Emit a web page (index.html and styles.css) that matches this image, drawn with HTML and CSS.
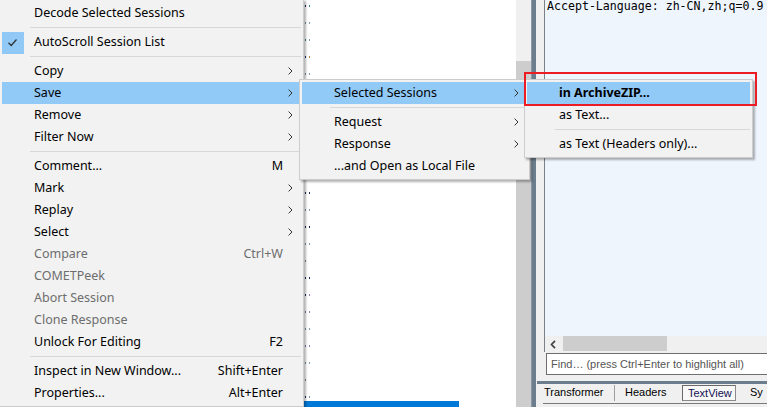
FILE: index.html
```html
<!DOCTYPE html>
<html>
<head>
<meta charset="utf-8">
<link rel="stylesheet" href="styles.css">
</head>
<body>
<div class="app">
  <div class="sessions">
    <div class="srow"><i class="d c1"></i><i class="d c2"></i></div>
    <div class="srow"><i class="d c3"></i><i class="d c3"></i></div>
    <div class="srow"><i class="d c2"></i><i class="d c3"></i></div>
    <div class="srow"><i class="d c1"></i><i class="d c4"></i></div>
    <div class="srow"><i class="d c3"></i><i class="d c3"></i></div>
    <div class="srow"><i class="d c2"></i><i class="d c1"></i></div>
    <div class="srow"><i class="d c1"></i><i class="d c2"></i></div>
    <div class="srow"><i class="d c3"></i><i class="d c3"></i></div>
    <div class="srow"><i class="d c1"></i><i class="d c2"></i></div>
    <div class="srow"><i class="d c1"></i><i class="d c2"></i></div>
    <div class="srow"><i class="d c3"></i><i class="d c3"></i></div>
    <div class="srow"><i class="d c1"></i><i class="d c1"></i></div>
    <div class="srow"><i class="d c3"></i><i class="d c3"></i></div>
    <div class="srow"><i class="d c1"></i><i class="d c1"></i></div>
    <div class="srow"><i class="d c3"></i><i class="d c3"></i></div>
    <div class="srow"><i class="d c5"></i></div>
    <div class="srow"><i class="d c1"></i><i class="d c1"></i></div>
    <div class="srow"><i class="d c1"></i><i class="d c6"></i></div>
    <div class="srow"><i class="d c6"></i><i class="d c6"></i></div>
    <div class="srow"><i class="d c3"></i><i class="d c3"></i></div>
    <div class="srow"><i class="d c6"></i><i class="d c6"></i></div>
    <div class="srow"><i class="d c3"></i><i class="d c3"></i></div>
    <div class="srow"><i class="d c5"></i></div>
    <div class="srow"><i class="d c1"></i><i class="d c3"></i></div>
    <div class="srow sel"><div class="selbar"></div></div>
  </div>
  <div class="vscroll"><div class="vthumb"></div></div>
  <div class="splitter"></div>
  <div class="inspector">
    <div class="gutter"></div>
    <div class="insp-top">
      <div class="textarea"><pre class="raw">Accept-Language: zh-CN,zh;q=0.9</pre></div>
      <div class="hscroll">
        <svg class="hs-arrow" width="6" height="9" viewBox="0 0 6 9"><polyline points="5,0.8 1.5,4.5 5,8.2" fill="none" stroke="#444" stroke-width="1.7"/></svg>
        <div class="hthumb"></div>
      </div>
      <div class="find">Find… (press Ctrl+Enter to highlight all)</div>
    </div>
    <div class="hstripe"></div>
    <div class="tabs">
      <div class="tab t1">Transformer</div>
      <div class="tab t2">Headers</div>
      <div class="tab t3 active">TextView</div>
      <div class="tab t4">Sy</div>
    </div>
  </div>
</div>

<div class="menu main-menu">
  <div class="item"><span class="ic"></span><span class="label">Decode Selected Sessions</span><span class="arr"></span></div>
  <div class="sep"></div>
  <div class="item"><span class="ic"><span class="check"><svg width="22" height="22" viewBox="0 0 22 22"><polyline points="6.5,10.8 9.2,13.5 14.5,7.5" fill="none" stroke="#333" stroke-width="1.3"/></svg></span></span><span class="label">AutoScroll Session List</span><span class="arr"></span></div>
  <div class="sep"></div>
  <div class="item"><span class="ic"></span><span class="label">Copy</span><span class="arr"><svg width="5" height="8" viewBox="0 0 5 8"><polyline points="0.6,0.6 4,4 0.6,7.4" fill="none" stroke="#333" stroke-width="1"/></svg></span></div>
  <div class="item hl"><span class="ic"></span><span class="label">Save</span><span class="arr"><svg width="5" height="8" viewBox="0 0 5 8"><polyline points="0.6,0.6 4,4 0.6,7.4" fill="none" stroke="#333" stroke-width="1"/></svg></span></div>
  <div class="item"><span class="ic"></span><span class="label">Remove</span><span class="arr"><svg width="5" height="8" viewBox="0 0 5 8"><polyline points="0.6,0.6 4,4 0.6,7.4" fill="none" stroke="#333" stroke-width="1"/></svg></span></div>
  <div class="item"><span class="ic"></span><span class="label">Filter Now</span><span class="arr"><svg width="5" height="8" viewBox="0 0 5 8"><polyline points="0.6,0.6 4,4 0.6,7.4" fill="none" stroke="#333" stroke-width="1"/></svg></span></div>
  <div class="sep"></div>
  <div class="item"><span class="ic"></span><span class="label">Comment...</span><span class="key">M</span><span class="arr"></span></div>
  <div class="item"><span class="ic"></span><span class="label">Mark</span><span class="arr"><svg width="5" height="8" viewBox="0 0 5 8"><polyline points="0.6,0.6 4,4 0.6,7.4" fill="none" stroke="#333" stroke-width="1"/></svg></span></div>
  <div class="item"><span class="ic"></span><span class="label">Replay</span><span class="arr"><svg width="5" height="8" viewBox="0 0 5 8"><polyline points="0.6,0.6 4,4 0.6,7.4" fill="none" stroke="#333" stroke-width="1"/></svg></span></div>
  <div class="item"><span class="ic"></span><span class="label">Select</span><span class="arr"><svg width="5" height="8" viewBox="0 0 5 8"><polyline points="0.6,0.6 4,4 0.6,7.4" fill="none" stroke="#333" stroke-width="1"/></svg></span></div>
  <div class="item dis"><span class="ic"></span><span class="label">Compare</span><span class="key">Ctrl+W</span><span class="arr"></span></div>
  <div class="item dis"><span class="ic"></span><span class="label">COMETPeek</span><span class="arr"></span></div>
  <div class="item dis"><span class="ic"></span><span class="label">Abort Session</span><span class="arr"></span></div>
  <div class="item dis"><span class="ic"></span><span class="label">Clone Response</span><span class="arr"></span></div>
  <div class="item"><span class="ic"></span><span class="label">Unlock For Editing</span><span class="key">F2</span><span class="arr"></span></div>
  <div class="sep"></div>
  <div class="item"><span class="ic"></span><span class="label">Inspect in New Window...</span><span class="key">Shift+Enter</span><span class="arr"></span></div>
  <div class="item"><span class="ic"></span><span class="label">Properties...</span><span class="key">Alt+Enter</span><span class="arr"></span></div>
</div>

<div class="menu sub1">
  <div class="item hl"><span class="ic"></span><span class="label">Selected Sessions</span><span class="arr"><svg width="5" height="8" viewBox="0 0 5 8"><polyline points="0.6,0.6 4,4 0.6,7.4" fill="none" stroke="#333" stroke-width="1"/></svg></span></div>
  <div class="sep"></div>
  <div class="item"><span class="ic"></span><span class="label">Request</span><span class="arr"><svg width="5" height="8" viewBox="0 0 5 8"><polyline points="0.6,0.6 4,4 0.6,7.4" fill="none" stroke="#333" stroke-width="1"/></svg></span></div>
  <div class="item"><span class="ic"></span><span class="label">Response</span><span class="arr"><svg width="5" height="8" viewBox="0 0 5 8"><polyline points="0.6,0.6 4,4 0.6,7.4" fill="none" stroke="#333" stroke-width="1"/></svg></span></div>
  <div class="item"><span class="ic"></span><span class="label">...and Open as Local File</span><span class="arr"></span></div>
</div>

<div class="menu sub2">
  <div class="item hl"><span class="ic"></span><span class="label bold">in ArchiveZIP...</span><span class="arr"></span></div>
  <div class="item"><span class="ic"></span><span class="label">as Text...</span><span class="arr"></span></div>
  <div class="sep"></div>
  <div class="item"><span class="ic"></span><span class="label">as Text (Headers only)...</span><span class="arr"></span></div>
</div>

<div class="redbox"></div>
</body>
</html>
```
FILE: styles.css
```css
html, body {
  margin: 0;
  padding: 0;
  width: 767px;
  height: 407px;
  overflow: hidden;
  background: #f0f0f0;
}

.app {
  display: grid;
  grid-template-columns: 516px 15px 5px 1fr;
  height: 407px;
}

/* session list */
.sessions {
  background: #ffffff;
  overflow: hidden;
  margin-top: -7px;
}
.srow {
  height: 17px;
  display: flex;
  gap: 3px;
  padding-left: 305px;
  padding-top: 12px;
  box-sizing: border-box;
}
.d {
  display: block;
  width: 1px;
  height: 2px;
}
.c1 { background: #1b2a5e; }
.c2 { background: #3b8a8a; }
.c3 { background: #7a9aa8; }
.c4 { background: #c08a3a; }
.c5 { background: #888888; }
.c6 { background: #8a7ab0; }
.srow.sel { padding: 0; }
.selbar {
  width: 459px;
  height: 17px;
  background: #0078d7;
}

.vscroll {
  background: #f0f0f0;
  padding-top: 61px;
}
.vthumb {
  background: #cdcdcd;
  height: 346px;
}

.splitter {
  background: #6c7d8d;
  border-left: 1px solid #8a99a6;
}

/* inspector */
.inspector {
  display: grid;
  grid-template-columns: 8px 1fr;
  grid-template-rows: 375px 6px 3px 1fr;
  background: #f0f0f0;
}
.gutter {
  grid-column: 1;
  grid-row: 1;
}
.insp-top {
  grid-column: 2;
  grid-row: 1;
  display: grid;
  grid-template-rows: 336px 16px 1px 22px;
  min-width: 0;
}
.textarea {
  background: #eef5fd;
  border-left: 1px solid #7c8087;
  overflow: hidden;
}
.raw {
  margin: -1px 0 0 0;
  padding-left: 2px;
  font-family: "DejaVu Sans Mono", monospace;
  font-size: 11.6px;
  line-height: 14px;
  color: #000;
  white-space: pre;
}
.hscroll {
  background: #f0f0f0;
  border-left: 1px solid #7c8087;
  display: flex;
  align-items: flex-start;
}
.hs-arrow {
  margin: 4px 0 0 5px;
}
.hthumb {
  margin-left: 7px;
  width: 104px;
  height: 15px;
  background: #cdcdcd;
}
.find {
  grid-row: 4;
  margin-left: 2px;
  border: 1px solid #6e6e6e;
  border-right: none;
  background: #ffffff;
  font-family: "Liberation Sans", Arial, sans-serif;
  font-size: 11px;
  color: #555555;
  line-height: 20px;
  padding-left: 4px;
  white-space: nowrap;
  overflow: hidden;
}
.hstripe {
  grid-column: 1 / 3;
  grid-row: 3;
  background: #6c7d8d;
  margin-left: 1px;
}
.tabs {
  grid-column: 2;
  grid-row: 4;
  display: flex;
  align-items: flex-start;
  border-bottom: 1px solid #7a7a7a;
  height: 18px;
  padding-top: 1px;
  font-family: "Liberation Sans", Arial, sans-serif;
  font-size: 11px;
  color: #000;
  white-space: nowrap;
  overflow: hidden;
  margin-left: -1px;
}
.tab {
  height: 16px;
  line-height: 14px;
  box-sizing: border-box;
  flex: none;
}
.t1 {
  width: 72px;
  padding-left: 1px;
  border-right: 1px solid #a0a0a0;
}
.t2 {
  width: 67px;
  padding-left: 10px;
}
.t3 {
  width: 54px;
  padding-left: 5px;
  border: 1px solid #8a8a8a;
  border-top-color: #6a6a6a;
  border-left-color: #6a6a6a;
  background: #f8f8f8;
  color: #101050;
  line-height: 14px;
}
.t4 {
  padding-left: 14px;
}

/* menus */
.menu {
  position: absolute;
  box-sizing: border-box;
  background: #f2f2f2;
  border: 1px solid #cccccc;
  padding: 2px;
  box-shadow: 2px 2px 2px rgba(0, 0, 0, 0.3);
  font-family: "Noto Sans", "Open Sans", sans-serif;
  font-size: 12.5px;
  color: #000;
}
.main-menu {
  left: -1px;
  top: -1px;
  width: 305px;
}
.sub1 {
  left: 299px;
  top: 79px;
  width: 231px;
}
.sub2 {
  left: 524px;
  top: 79px;
  width: 229px;
}
.item {
  display: flex;
  align-items: center;
  height: 22px;
  box-sizing: border-box;
  padding-bottom: 2px;
  white-space: nowrap;
}
.item.hl {
  background: #91c9f7;
}
.item.dis {
  color: #6d6d6d;
}
.ic {
  width: 32px;
  height: 20px;
  flex: none;
}
.check {
  display: block;
  width: 22px;
  height: 22px;
  margin-top: 1px;
  background: #90c8f6;
}
.check svg {
  display: block;
}
.label {
  flex: 1;
}
.bold {
  font-weight: bold;
}
.key {
  flex: none;
}
.arr {
  width: 18px;
  flex: none;
  display: flex;
  align-items: center;
  padding-left: 5px;
  padding-top: 1px;
  box-sizing: border-box;
}
.arr svg {
  display: block;
}
.sep {
  height: 7px;
  display: flex;
  align-items: center;
  padding-left: 28px;
}
.sep::after {
  content: "";
  display: block;
  flex: 1;
  height: 1px;
  background: #d7d7d7;
}

.redbox {
  position: absolute;
  left: 524px;
  top: 72px;
  width: 233px;
  height: 34px;
  box-sizing: border-box;
  border: 2px solid #ec1c24;
}
```
